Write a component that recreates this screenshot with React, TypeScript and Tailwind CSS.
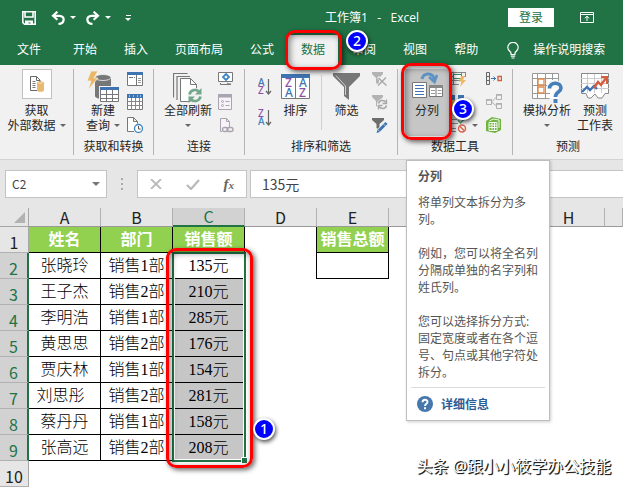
import type { ReactNode } from "react";

const TABS = ["开始", "插入", "页面布局", "公式", "数据", "审阅", "视图", "帮助"];

const ROWS = [
  { name: "张晓玲", dept: "销售1部", amount: "135元" },
  { name: "王子杰", dept: "销售2部", amount: "210元" },
  { name: "李明浩", dept: "销售1部", amount: "285元" },
  { name: "黄思思", dept: "销售2部", amount: "176元" },
  { name: "贾庆林", dept: "销售1部", amount: "154元" },
  { name: "刘思彤\u00a0\u00a0", dept: "销售2部", amount: "281元" },
  { name: "蔡丹丹", dept: "销售1部", amount: "158元" },
  { name: "张高远", dept: "销售2部", amount: "208元" },
];

const COLUMNS = ["A", "B", "C", "D", "E", "F", "G", "H", ""];

/* ---------- shared bits ---------- */

function RedFrame({ className }: { className: string }) {
  return (
    <span
      className={`pointer-events-none absolute z-20 rounded-[10px] border-3 border-[#fe0000] shadow-[2px_2px_5px_rgba(0,0,0,0.6),inset_2px_2px_6px_rgba(0,0,0,0.45)] ${className}`}
    />
  );
}

function Badge({ n, className }: { n: number; className: string }) {
  return (
    <span
      className={`absolute z-30 flex h-[22px] w-[22px] items-center justify-center rounded-full border-2 border-white bg-[#0000fe] font-['Noto_Sans',sans-serif] text-[14px] leading-none font-medium text-white shadow-[1px_2px_4px_rgba(0,0,0,0.7)] ${className}`}
    >
      {n}
    </span>
  );
}

function Caret({ className = "text-[#666]" }: { className?: string }) {
  return (
    <svg width="6" height="3" viewBox="0 0 6 3" className={`shrink-0 ${className}`}>
      <path d="M0 0h6L3 3z" fill="currentColor" />
    </svg>
  );
}

function Group({ label, className, children }: { label?: string; className: string; children: ReactNode }) {
  return (
    <div className={`flex shrink-0 flex-col border-[#b5b5b5] ${className}`}>
      <div className="flex h-[70px]">{children}</div>
      <div className="flex h-4 items-center justify-center whitespace-nowrap">{label}</div>
    </div>
  );
}

function BigButton({ icon, lines, caret, className = "" }: { icon: ReactNode; lines: string[]; caret?: "inline" | "below"; className?: string }) {
  return (
    <button type="button" className={`flex shrink-0 flex-col items-center leading-[15px] whitespace-nowrap ${className}`}>
      <span className="flex h-[34px] items-end justify-center">{icon}</span>
      {lines.map((line, i) => (
        <span key={line} className="flex items-center gap-1">
          {line}
          {caret === "inline" && i === lines.length - 1 && <Caret />}
        </span>
      ))}
      {caret === "below" && (
        <span className="flex h-[15px] items-center">
          <Caret />
        </span>
      )}
    </button>
  );
}

function SmallColumn({ labels, children }: { labels: string[]; children: ReactNode[] }) {
  return (
    <div className="flex shrink-0 flex-col gap-[7px] pt-[2px]">
      {children.map((icon, i) => (
        <button key={labels[i]} type="button" aria-label={labels[i]} className="h-4">
          {icon}
        </button>
      ))}
    </div>
  );
}

/* ---------- title bar icons ---------- */

const SaveIcon = () => (
  <svg width="14" height="14" viewBox="0 0 14 14" fill="none" stroke="#fff" strokeWidth="1.6">
    <path d="M.8.8h12.4v12.4H2.5L.8 11.5zM3 1v5h8V1" />
    <path d="M3 9.5h8V14H8.500v-2.500h-2V14H3z" fill="#fff" stroke="none" />
  </svg>
);

const UndoIcon = () => (
  <svg width="14" height="14" viewBox="0 0 14 14" fill="none" stroke="#fff" strokeWidth="2.2">
    <path d="M2 4.8h6.5c5.8.5 5.5 7.6-1 8.2" />
    <path d="M6.4.7 2 4.8l4.4 4" />
  </svg>
);

const RedoIcon = () => (
  <svg width="14" height="14" viewBox="0 0 14 14" fill="none" stroke="#fff" strokeWidth="2.2">
    <path d="M12 4.8H5.5C-.3 5.3 0 12.4 6.5 13" />
    <path d="M7.6.7 12 4.8l-4.4 4" />
  </svg>
);

const RibbonToggleIcon = () => (
  <svg width="14" height="11" viewBox="0 0 14 11" fill="none" stroke="#fff">
    <path d="M.5.5h13v10H.5zM.5 2.5h13M7 9V4.5M4.8 6.3 7 4.2l2.2 2.1" />
  </svg>
);

const BulbIcon = () => (
  <svg width="12" height="17" viewBox="0 0 12 17" fill="none" stroke="#fff" strokeWidth="1.2">
    <path d="M4 12.5V11C3.5 9.3.8 8.5.8 5.5a5.2 5.2 0 0 1 10.4 0C11.2 8.5 8.5 9.3 8 11v1.5zM3.8 14.2h4.4M4.5 16h3" />
  </svg>
);

/* ---------- ribbon icons ---------- */

const ExternalDataIcon = () => (
  <svg width="16" height="18" viewBox="0 0 16 18" fill="none">
    <path d="M8 15.5H1.5v-14h6L11 5v2M7.5 1.5v4H11" stroke="#666" />
    <path d="M3.5 6.5h3M3.5 8.5h3M3.5 10.5h3M3.5 12.5h3" stroke="#777" />
    <path d="M8 8.5v6.7c0 2 7 2 7 0V8.5z" fill="#e8b971" />
    <ellipse cx="11.5" cy="8.3" rx="3.5" ry="1.6" fill="#f0cd95" stroke="#dba956" strokeWidth=".6" />
  </svg>
);

const NewQueryIcon = () => (
  <svg width="34" height="33" viewBox="0 0 34 33" fill="none">
    <path d="M9 8v18c0 4 16 4 16 0V8z" fill="#777" />
    <ellipse cx="17" cy="7.5" rx="8" ry="3" fill="#777" stroke="#f1f1f1" strokeWidth=".8" />
    <path d="M5 1h7L8 8h4L2 20l3-9H1z" fill="#ecb765" stroke="#f1f1f1" strokeWidth=".8" />
    <path d="M14 17h19v15H14z" fill="#fff" stroke="#f1f1f1" strokeWidth="2" />
    <path d="M14.5 18.5h18v13h-18zM20.5 20v11M26.5 20v11M14 24.5h19M14 28.5h19" stroke="#777" />
    <path d="M14 17h19v3H14z" fill="#3f74b1" />
  </svg>
);

const ShowQueriesIcon = () => (
  <svg width="16" height="16" viewBox="0 0 16 16" fill="none">
    <path d="M.5 2.5h15v12H.5z" fill="#fff" stroke="#777" />
    <path d="M0 1h16v3H0z" fill="#3f74b1" />
    <path d="M2 6.5h4M7 6.5h1M9.5 4v10.5" stroke="#777" />
    <path d="M11 7.5h3M11 9.5h3M11 11.5h3" stroke="#999" />
  </svg>
);

const FromTableIcon = () => (
  <svg width="16" height="16" viewBox="0 0 16 16" fill="none">
    <path d="M.5.5h15v15H.5z" fill="#fff" stroke="#777" />
    <path d="M4.5 4v12M8.5 4v12M12.5 4v12M0 7.5h16M0 11.5h16" stroke="#888" />
    <path d="M0 0h16v4H0z" fill="#3f74b1" />
    <path d="M2 2h1M6 2h1M10 2h1M13 2h1" stroke="#fff" />
  </svg>
);

const RecentSourcesIcon = () => (
  <svg width="16" height="16" viewBox="0 0 16 16" fill="none">
    <path d="M7 14.5H.5V.5h6l4 4v2M6.5.5v4h4" fill="#fff" stroke="#777" />
    <circle cx="11.5" cy="11.5" r="4" fill="#fff" stroke="#3f84c5" strokeWidth="1.3" />
    <path d="M11.5 9v3h2.2" stroke="#555" />
  </svg>
);

const RefreshAllIcon = () => (
  <svg width="30" height="30" viewBox="0 0 30 30" fill="none">
    <path d="M.5 24.5V.5h14M4 27V3.5h13" stroke="#777" strokeWidth="1.2" />
    <path d="M7.5 5.5h10l6 6v17h-16z" fill="#fff" stroke="#777" />
    <path d="M17.5 5.5v6h6" stroke="#777" />
    <circle cx="22" cy="22.5" r="7.5" fill="#f1f1f1" />
    <path d="M16.5 21.5c1-5 7.5-6 10-2.3M27.5 23.5c-1 5-7.5 6-10 2.3" stroke="#72a58a" strokeWidth="2.6" />
    <path d="M28.5 15v6.5H22zM15.5 30v-6.5H22z" fill="#72a58a" />
  </svg>
);

const ConnectionsIcon = () => (
  <svg width="16" height="16" viewBox="0 0 16 16" fill="none">
    <path d="M.5 1.5h14v9H.5zM5 13.500H2.500V12M9 12l3 1.500V12" fill="#fff" stroke="#777" />
    <path d="m8 3 3 3-3 3-3-3z" stroke="#3f84c5" strokeWidth="1.8" />
    <path d="M4 13.5h9" stroke="#777" />
  </svg>
);

const PropertiesIcon = () => (
  <svg width="16" height="16" viewBox="0 0 16 16" fill="none" stroke="#aaa4b0">
    <path d="M.5.5h13v15H.5z" fill="#f8f2f9" />
    <path d="M0 2h14" strokeWidth="3" />
    <path d="M7.5 7.5h4M7.5 11.5h4" />
    <circle cx="4.5" cy="7.5" r="1" />
    <circle cx="4.5" cy="11.5" r="1" />
  </svg>
);

const EditLinksIcon = () => (
  <svg width="16" height="16" viewBox="0 0 16 16" fill="none" stroke="#aaa4b0">
    <path d="M4 14.5H2.5V1.500h6l3 3v6M8.500 1.500v3h3" fill="#f8f2f9" />
    <rect x="4.5" y="10.5" width="5.5" height="4" rx="2" strokeWidth="1.4" />
    <rect x="9" y="10.5" width="6" height="4" rx="2" strokeWidth="1.4" />
  </svg>
);

const SortSmallIcon = ({ top, bottom }: { top: string; bottom: string }) => (
  <svg width="14" height="18" viewBox="0 0 14 18" className="overflow-visible font-['Noto_Sans',sans-serif] text-[10px] font-medium">
    <text x="0" y="8" fill={top === "A" ? "#3f74b1" : "#8a4fa8"}>{top}</text>
    <text x="0" y="16" fill={bottom === "A" ? "#3f84c5" : "#8a4fa8"}>{bottom}</text>
    <path d="M10.5 1v15M8 13l2.5 3 2.5-3" fill="none" stroke="#666" strokeWidth="1.2" />
  </svg>
);

const SortIcon = () => (
  <svg width="29" height="25" viewBox="0 0 29 25" className="overflow-visible font-['Noto_Sans',sans-serif] text-[12px] font-medium">
    <path d="M.5 1.5h28v23H.5zM14.5 4v20" fill="#fff" stroke="#777" />
    <path d="M0 0h29v4H0z" fill="#3f74b1" />
    <text x="4" y="13" fill="#8a4fa8">Z</text>
    <text x="4" y="23" fill="#3f74b1">A</text>
    <text x="18" y="13" fill="#3f74b1">A</text>
    <text x="18" y="23" fill="#8a4fa8">Z</text>
  </svg>
);

const FilterIcon = () => (
  <svg width="27" height="27" viewBox="0 0 27 27">
    <path d="M0 0h27v3L16 14v13l-5-4v-9L0 3z" fill="#777" />
    <path d="M3 2.500 12.500 13v9" fill="none" stroke="#ccc" />
  </svg>
);

const ClearFilterIcon = () => (
  <svg width="16" height="16" viewBox="0 0 16 16" fill="none">
    <path d="M0 1h11v2L7 7v7l-3-2V7L0 3z" fill="#b3b3b3" />
    <path d="m6 6 8.5 8.5M14.5 6 6 14.5" stroke="#f1f1f1" strokeWidth="3" />
    <path d="m6.5 7 8 7.5M14 6.500l-8 8" stroke="#a9a9a9" strokeWidth="1.5" />
  </svg>
);

const ReapplyIcon = () => (
  <svg width="16" height="16" viewBox="0 0 16 16" fill="none">
    <path d="M0 1h11v2L7 7v7l-3-2V7L0 3z" fill="#b3b3b3" />
    <circle cx="10.5" cy="10.5" r="5.5" fill="#f1f1f1" />
    <path d="M6.5 9.5c1-3.5 5.5-4 7.5-1M14.500 11.5c-1 3.5-5.5 4-7.5 1" stroke="#a9a9a9" strokeWidth="1.6" />
    <path d="M14.5 5.5v4h-4M6.500 15.500v-4h4" stroke="#a9a9a9" strokeWidth="1.3" />
  </svg>
);

const AdvancedFilterIcon = () => (
  <svg width="16" height="16" viewBox="0 0 16 16" fill="none">
    <path d="M0 1h12v2L7.5 7v6l-3-2V7L0 3z" fill="#6d6d6d" />
    <path d="m6.5 14.5 7.5-7.5" stroke="#f1f1f1" strokeWidth="5" />
    <path d="m7 13.5 7.5-7.5" stroke="#3f74b1" strokeWidth="3" />
    <path d="m4.5 16 1-3.5L8 15z" fill="#3f74b1" />
    <path d="m11.5 7 2.5 2.5" stroke="#cfe0f2" strokeWidth=".7" />
  </svg>
);

const TextToColumnsIcon = () => (
  <svg width="31" height="27" viewBox="0 0 31 27" fill="none">
    <path d="M.5 10.5h14v15H.5z" fill="#fff" stroke="#777" />
    <path d="M3 13.5h9M3 16.5h9M3 19.500h9M3 22.500h9" stroke="#3f74b1" />
    <path d="M17.5 13.5h13v11h-13zM24 15v9" fill="#fff" stroke="#777" />
    <path d="M17 13h14v3H17z" fill="#888" />
    <path d="M19 18.5h4M19 21.500h4M25.500 18.500h4M25.500 21.500h4" stroke="#999" />
    <path d="M10 7c1-6.500 11-7.500 12.500 1" stroke="#5d93c4" strokeWidth="3" />
    <path d="m17 5 5.500 5 2.500-7" stroke="#5d93c4" strokeWidth="2.5" />
  </svg>
);

const FlashFillIcon = () => (
  <svg width="18" height="16" viewBox="0 0 18 16" fill="none">
    <path d="M0 1.5h17M0 5.5h17M0 9.5h12M0 13.5h10M4.5 1v13M12.5 1v9M16.5 1v5" stroke="#888" />
    <path d="M4.5 3.5h8v4h-8z" fill="#fff" stroke="#3d8a60" />
    <path d="M12 5h4l-2 4h3l-6 7 1.5-5.5H10z" fill="#ecb765" />
  </svg>
);

const RemoveDuplicatesIcon = () => (
  <svg width="18" height="16" viewBox="0 0 18 16">
    <path d="M0 1h6v5H0zM9 1h6v5H9z" fill="#3f74b1" />
    <path d="M0 6h6v5H0z" fill="#ecb765" />
    <path d="M0 11h6v4H0z" fill="#2c4f7a" />
  </svg>
);

const ValidationIcon = () => (
  <svg width="18" height="16" viewBox="0 0 18 16" fill="none">
    <path d="M0 2.5h8M0 6.5h9M0 11.5h7M0 14.5h7" stroke="#888" />
    <path d="m9 3 2.5 3L16 1" stroke="#62a07f" strokeWidth="1.8" />
    <circle cx="13" cy="11.5" r="3.5" stroke="#d9654f" strokeWidth="1.5" />
    <path d="m10.5 9 5 5" stroke="#d9654f" strokeWidth="1.5" />
  </svg>
);

const ConsolidateIcon = () => (
  <svg width="16" height="16" viewBox="0 0 16 16" fill="none">
    <path d="M.5 1.5h3v12h-3zM.5 5.5h3M.5 9.5h3" stroke="#666" />
    <path d="M5 7.500h5M7.500 5.500l2 2-2 2" stroke="#3f74b1" />
    <path d="M12 5.500h3.500v4H12z" stroke="#d55c3c" strokeWidth="1.3" />
  </svg>
);

const RelationshipsIcon = () => (
  <svg width="16" height="16" viewBox="0 0 16 16" fill="none" stroke="#b0b0b0">
    <path d="M.5 5.5h5v5h-5zM10.5.5h5v5h-5zM10.5 9.5h5v5h-5zM5.5 8l5-5M5.5 8l5 4" />
    <path d="M0 6h6M10 1h6M10 10h6" strokeWidth="1.6" />
  </svg>
);

const DataModelIcon = () => (
  <svg width="16" height="16" viewBox="0 0 16 16" fill="none">
    <path d="m0 4 6-4 9 2v11l-6 3-9-2z" fill="#6fb43f" />
    <path d="M3 5.5h8v8H3zM3 8h8M3 10.500h8M6 5.500v8M8.500 5.500v8M3.500 4 7 2l6 1v8" stroke="#fff" strokeWidth=".9" />
  </svg>
);

const WhatIfIcon = () => (
  <svg width="31" height="30" viewBox="0 0 31 30" fill="none">
    <path d="M.5.5h26v25H.5z" fill="#fff" />
    <path d="M26.5 8.500v-8H.5v25h17M5.500 1v25M13.500 1v25M20.500 1v6M0 5.500h26M0 12.500h16M0 20.500h18" stroke="#999" />
    <path d="M6 6h6v6H6zM6 14h6v6H6z" fill="#fff" stroke="#e08a4a" strokeWidth="1.3" />
    <path d="M17.5 15.500c0-7 11.500-7 11.500-.5 0 4-5.500 4-5.500 9" stroke="#f1f1f1" strokeWidth="6" />
    <path d="M17.5 15.500c0-7 11.500-7 11.500-.5 0 4-5.500 4-5.500 9" stroke="#4680b8" strokeWidth="3.6" />
    <path d="M21.5 26h4v4h-4z" fill="#4680b8" />
  </svg>
);

const ForecastSheetIcon = () => (
  <svg width="29" height="26" viewBox="0 0 29 26" fill="none">
    <path d="M.5.5h27v20H24L21 25h-4l-3-4-4 4H7l-2-4.500H.5z" fill="#fff" stroke="#888" />
    <path d="M6.500 1v19M13.500 1v19M20.500 1v19M0 5.500h28M0 10.500h28M0 15.500h28" stroke="#ccc" />
    <path d="m1 19 5-5 3 3 4-4 3 3" stroke="#3f74b1" strokeWidth="2.4" />
    <path d="m13 15 4-6 3 3 5-7" stroke="#d55c3c" strokeWidth="2.4" />
    <path d="M20 4h6v7" stroke="#d55c3c" strokeWidth="2" />
  </svg>
);

/* ---------- page sections ---------- */

function TitleBar() {
  return (
    <div className="flex h-[35px] items-center pr-[29px] pl-[22px]">
      <button type="button" aria-label="保存" className="mr-[15px]"><SaveIcon /></button>
      <button type="button" aria-label="撤消" className="mr-[10px] flex items-center gap-[5px]">
        <UndoIcon /><Caret className="text-white" />
      </button>
      <button type="button" aria-label="恢复" className="mr-[14px] flex items-center gap-[5px]">
        <RedoIcon /><Caret className="text-white" />
      </button>
      <button type="button" aria-label="自定义快速访问工具栏" className="flex flex-col items-center gap-[2px]">
        <span className="h-px w-[5px] bg-white" /><Caret className="text-white" />
      </button>
      <div className="mr-[89px] ml-auto whitespace-nowrap">工作簿1&nbsp;&nbsp; -&nbsp;&nbsp; Excel</div>
      <button type="button" className="h-[19px] w-[46px] bg-white leading-[17px] text-[#217346]">登录</button>
      <button type="button" aria-label="功能区显示选项" className="ml-[26px]"><RibbonToggleIcon /></button>
    </div>
  );
}

function TabStrip() {
  return (
    <nav className="flex items-stretch whitespace-nowrap">
      <button type="button" className="pr-[19px] pl-[17px]">文件</button>
      <div className="flex gap-px">
        {TABS.map((tab) => (
          <div key={tab} className="relative">
            <button
              type="button"
              className={tab === "数据" ? "h-[30px] bg-[#f1f1f1] px-[13px] text-[#217346]" : "h-[30px] px-[13px]"}
            >
              {tab}
            </button>
            {tab === "数据" && (
              <>
                <RedFrame className="-top-[5px] -left-[3px] h-[40px] w-[57px]" />
                <Badge n={2} className="-top-[5px] left-[58px]" />
              </>
            )}
          </div>
        ))}
      </div>
      <button type="button" className="ml-4 flex items-center gap-[14px]">
        <BulbIcon />
        操作说明搜索
      </button>
    </nav>
  );
}

function Tooltip() {
  return (
    <div
      role="tooltip"
      className="absolute top-[91px] left-px z-30 w-[144px] border border-[#bebebe] bg-white leading-[17px] text-[#555] shadow-[1px_1px_3px_rgba(0,0,0,0.2)]"
    >
      <div className="px-[11px] pt-[7px]">
        <h2 className="mb-[9px] font-bold">分列</h2>
        <p className="mb-[17px]">将单列文本拆分为多列。</p>
        <p className="mb-[17px]">例如，您可以将全名列分隔成单独的名字列和姓氏列。</p>
        <p>
          您可以选择拆分方式:
          <br />
          固定宽度或者在各个逗号、句点或其他字符处拆分。
        </p>
      </div>
      <div className="mx-1 mt-[6px] flex h-[33px] items-center gap-2 border-t border-[#dcdcdc] pl-[6px]">
        <svg width="16" height="16" viewBox="0 0 16 16" fill="none">
          <circle cx="8" cy="8" r="8" fill="#4678ae" />
          <path d="M5.5 6.3c0-3.400 5-3.400 5-.3C10.500 7.800 8 7.800 8 10" stroke="#fff" strokeWidth="1.9" />
          <path d="M7 11.2h2v2H7z" fill="#fff" />
        </svg>
        <a href="#" className="font-bold text-[#2b5c97]">详细信息</a>
      </div>
    </div>
  );
}

function Ribbon() {
  return (
    <div className="flex border-b border-[#d2d2d2] bg-[#f1f1f1] pt-1 pb-1 text-[#262626]">
      <Group className="w-[74px] border-r">
        <button type="button" className="flex w-[73px] flex-col items-center leading-[15px] whitespace-nowrap">
          <span className="mb-1 flex h-[30px] w-[30px] items-center justify-center border border-[#c0c0c0] bg-white">
            <ExternalDataIcon />
          </span>
          <span>获取</span>
          <span className="flex items-center gap-1">外部数据<Caret /></span>
        </button>
      </Group>

      <Group label="获取和转换" className="w-[80px] border-r">
        <BigButton icon={<NewQueryIcon />} lines={["新建", "查询"]} caret="inline" className="mr-[7px] ml-3" />
        <SmallColumn labels={["显示查询", "从表格", "最近使用的源"]}>
          {[<ShowQueriesIcon />, <FromTableIcon />, <RecentSourcesIcon />]}
        </SmallColumn>
      </Group>

      <Group label="连接" className="w-[91px] border-r">
        <BigButton icon={<RefreshAllIcon />} lines={["全部刷新"]} caret="below" className="mr-[6px] ml-[10px]" />
        <SmallColumn labels={["连接", "属性", "编辑链接"]}>
          {[<ConnectionsIcon />, <PropertiesIcon />, <EditLinksIcon />]}
        </SmallColumn>
      </Group>

      <Group label="排序和筛选" className="w-[153px] border-r">
        <div className="flex flex-col gap-[13px] pt-[9px] pr-[9px] pl-[13px]">
          <button type="button" aria-label="升序"><SortSmallIcon top="A" bottom="Z" /></button>
          <button type="button" aria-label="降序"><SortSmallIcon top="Z" bottom="A" /></button>
        </div>
        <BigButton icon={<span className="mb-1"><SortIcon /></span>} lines={["排序"]} />
        <div className="mt-[6px] mr-[11px] ml-[11px] h-[55px] w-px bg-[#d0d0d0]" />
        <BigButton icon={<span className="mb-[3px]"><FilterIcon /></span>} lines={["筛选"]} className="mr-3" />
        <SmallColumn labels={["清除", "重新应用", "高级"]}>
          {[<ClearFilterIcon />, <ReapplyIcon />, <AdvancedFilterIcon />]}
        </SmallColumn>
      </Group>

      <Group label="数据工具" className="w-[115px] border-r">
        <div className="relative ml-[7px]">
          <BigButton
            icon={<span className="mb-1"><TextToColumnsIcon /></span>}
            lines={["分列"]}
            className="h-[67px] w-[44px] bg-[#c6c6c6]"
          />
          <RedFrame className="-top-[6px] -left-1 h-[77px] w-[51px]" />
          <Badge n={3} className="top-[29px] left-[47px]" />
          <Tooltip />
        </div>
        <SmallColumn labels={["快速填充", "删除重复值", "数据验证"]}>
          {[<FlashFillIcon />, <RemoveDuplicatesIcon />, <ValidationIcon />]}
        </SmallColumn>
        <div className="mt-[55px] ml-[5px]"><Caret /></div>
        <div className="ml-2">
          <SmallColumn labels={["合并计算", "关系", "管理数据模型"]}>
            {[<ConsolidateIcon />, <RelationshipsIcon />, <DataModelIcon />]}
          </SmallColumn>
        </div>
      </Group>

      <Group label="预测" className="w-[110px]">
        <BigButton icon={<WhatIfIcon />} lines={["模拟分析"]} caret="below" className="mr-[6px] ml-[10px]" />
        <BigButton icon={<span className="mb-1"><ForecastSheetIcon /></span>} lines={["预测", "工作表"]} />
      </Group>
    </div>
  );
}

function FormulaBar() {
  return (
    <div className="flex bg-[#e6e6e6] py-[10px] pl-[5px] font-['Noto_Sans_CJK_SC',sans-serif]">
      <div className="flex h-7 w-[102px] shrink-0 items-center border border-[#c4c4c4] bg-white px-[6px]">
        <input aria-label="名称框" defaultValue="C2" className="w-0 flex-1 text-[12px] text-[#444] outline-none" />
        <button type="button" aria-label="展开名称框">
          <svg width="8" height="4" viewBox="0 0 8 4"><path d="M0 0h8L4 4z" fill="#777" /></svg>
        </button>
      </div>
      <div className="flex w-[30px] shrink-0 flex-col items-center justify-center gap-[3px]">
        <span className="h-[2px] w-[2px] bg-[#aaa]" />
        <span className="h-[2px] w-[2px] bg-[#aaa]" />
        <span className="h-[2px] w-[2px] bg-[#aaa]" />
      </div>
      <div className="mr-[3px] flex h-7 w-[110px] shrink-0 items-center justify-between border border-[#c4c4c4] bg-white px-3">
        <button type="button" aria-label="取消">
          <svg width="12" height="10" viewBox="0 0 12 10"><path d="m1 0 10 10M11 0 1 10" stroke="#b9b9b9" strokeWidth="1.8" /></svg>
        </button>
        <button type="button" aria-label="输入">
          <svg width="14" height="11" viewBox="0 0 14 11"><path d="m1 6 4 4 8-9" fill="none" stroke="#b9b9b9" strokeWidth="2.2" /></svg>
        </button>
        <button type="button" aria-label="插入函数" className="font-['Liberation_Serif',serif] text-[15px] leading-none font-bold text-[#666] italic">
          f<span className="text-[11px]">x</span>
        </button>
      </div>
      <input
        aria-label="编辑栏"
        defaultValue="135元"
        className="h-7 min-w-0 flex-1 border border-r-0 border-[#c4c4c4] bg-white pl-[11px] text-[14px] text-[#444] outline-none"
      />
    </div>
  );
}

const labelCell = "border-r border-b border-black bg-[#92d050] font-bold text-white";
const dataCell = "border-r border-b border-black";

function RowHead({ n, selected = false }: { n: number; selected?: boolean }) {
  return (
    <th
      scope="row"
      className={
        selected
          ? "border-r-2 border-b border-r-[#217346] border-b-[#b1b1b1] bg-[#d2d2d2] p-0 pt-1 font-['Noto_Sans_CJK_SC',sans-serif] font-normal text-[#217346]"
          : "border-r border-b border-r-[#a6a6a6] border-b-[#b1b1b1] bg-[#e6e6e6] p-0 pt-1 font-['Noto_Sans_CJK_SC',sans-serif] font-normal text-[#222]"
      }
    >
      {n}
    </th>
  );
}

function Sheet() {
  return (
    <table className="w-full table-fixed border-separate border-spacing-0 font-['Liberation_Serif','Noto_Sans_CJK_SC',serif] text-[16px] leading-[20px] whitespace-nowrap text-black">
      <colgroup>
        <col className="w-[29px]" />
        {COLUMNS.slice(0, 8).map((c) => <col key={c} className="w-[72px]" />)}
        <col />
      </colgroup>
      <thead>
        <tr className="h-[19px] bg-[#e6e6e6] font-['Noto_Sans_CJK_SC',sans-serif] leading-[17px] text-[#222]">
          <th className="border-r border-b border-[#a6a6a6] p-0">
            <svg width="11" height="11" viewBox="0 0 11 11" className="mr-[3px] ml-auto"><path d="M11 0v11H0z" fill="#b2b2b2" /></svg>
          </th>
          {COLUMNS.map((c) => (
            <th
              key={c}
              scope="col"
              className={
                c === "C"
                  ? "border-r border-b-2 border-r-[#b1b1b1] border-b-[#217346] bg-[#d2d2d2] p-0 font-normal text-[#217346]"
                  : "border-r border-b border-r-[#b1b1b1] border-b-[#9a9a9a] p-0 font-normal"
              }
            >
              {c}
            </th>
          ))}
        </tr>
      </thead>
      <tbody className="text-center">
        <tr className="h-[26px]">
          <RowHead n={1} />
          <td className={labelCell}>姓名</td>
          <td className={labelCell}>部门</td>
          <td className={labelCell}>销售额</td>
          <td className="border-r border-black" />
          <td className={labelCell}>销售总额</td>
          <td colSpan={4} />
        </tr>
        {ROWS.map((row, i) => (
          <tr key={row.name} className="h-[26px]">
            <RowHead n={i + 2} selected />
            <td className={`p-0 pt-px font-light ${dataCell}`}>{row.name}</td>
            <td className={`p-0 pt-px font-light ${dataCell}`}>{row.dept}</td>
            <td className={`relative p-0 pt-px font-light ${dataCell} ${i === 0 ? "bg-white" : "bg-[#c6c6c6]"}`}>
              {row.amount}
              {i === 0 && (
                <>
                  <span className="absolute -top-px -left-px z-10 h-[210px] w-[74px] border-2 border-[#217346] shadow-[inset_0_0_0_1px_#fff]">
                    <span className="absolute -right-[3px] -bottom-[3px] h-[6px] w-[6px] border-t border-l border-white bg-[#217346]" />
                  </span>
                  <RedFrame className="-top-[5px] -left-[7px] h-[220px] w-[87px]" />
                  <Badge n={1} className="top-[165px] left-[80px]" />
                </>
              )}
            </td>
            {i === 0 ? (
              <>
                <td className="border-r border-black" />
                <td className={dataCell} />
                <td colSpan={4} />
              </>
            ) : (
              <td colSpan={6} />
            )}
          </tr>
        ))}
        <tr className="h-[26px]">
          <RowHead n={10} />
          <td colSpan={9} />
        </tr>
      </tbody>
    </table>
  );
}

export default function App() {
  return (
    <div className="relative min-h-screen overflow-hidden bg-white font-['Open_Sans','Noto_Sans_CJK_SC',sans-serif] text-[12px]">
      <header className="bg-[#217346] text-white">
        <TitleBar />
        <TabStrip />
      </header>
      <Ribbon />
      <FormulaBar />
      <Sheet />
      <div className="absolute right-3 bottom-[9px] text-[16px] leading-6 whitespace-nowrap text-white [text-shadow:1px_1px_0_#222,1px_1px_1px_#000]">
        头条 @跟小小筱学办公技能
      </div>
    </div>
  );
}
